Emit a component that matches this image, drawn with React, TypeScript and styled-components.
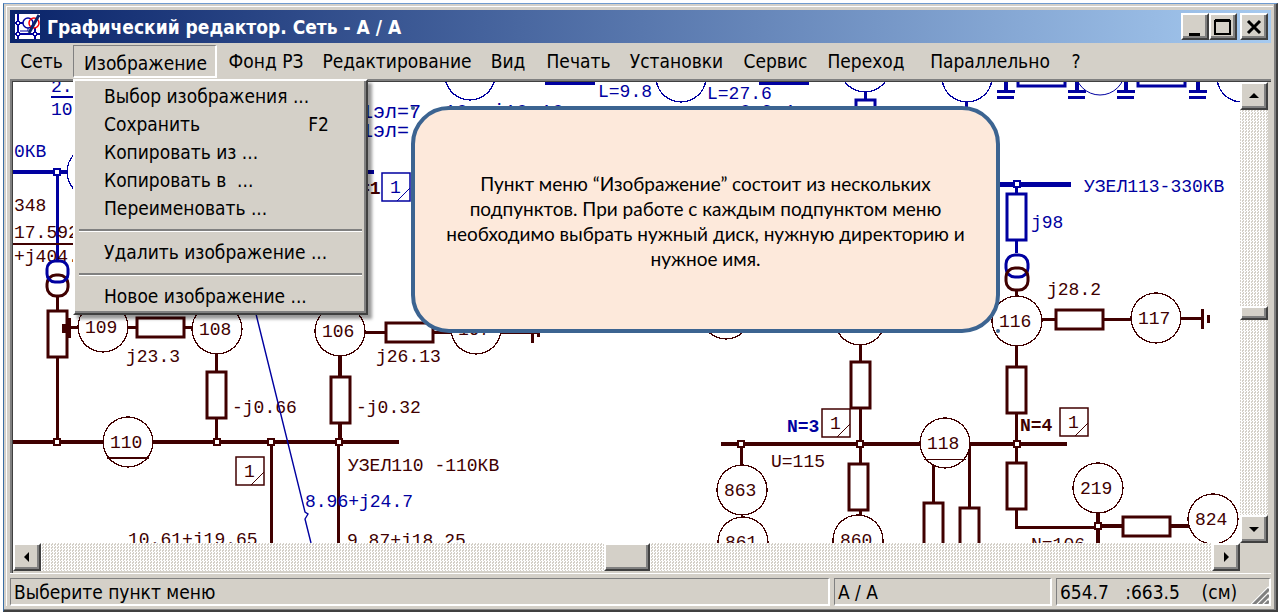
import React from "react";
import styled, { createGlobalStyle, css } from "styled-components";

const FACE = "#d4d0c8";
const SHADE = "#808080";
const DARK = "#404040";
const BLUE = "#0000a0";
const BROWN = "#400000";
const CALLOUT = "#3c6491";

const UI_FONT = `"DejaVu Sans Condensed", "DejaVu Sans", sans-serif`;

const GlobalStyle = createGlobalStyle`
  * { box-sizing: border-box; }
  body { margin: 0; background: #fff; font-family: ${UI_FONT}; color: #000; }
  button, input { font: inherit; color: inherit; }
`;

const raised = css`
  background: ${FACE};
  border: 2px solid;
  border-color: #fff ${DARK} ${DARK} #fff;
  box-shadow: inset -2px -2px 0 ${SHADE};
`;

const dither = css`
  background: repeating-conic-gradient(#fff 0 25%, ${FACE} 0 50%) 0 0 / 3px 3px;
`;

const Page = styled.main`
  position: relative;
  display: flex;
  height: 100vh;
  min-height: 420px;
  padding: 3px 6px 1px 3px;
`;

const Window = styled.section`
  flex: 1;
  min-width: 0;
  display: flex;
  background: ${FACE};
  border-style: solid;
  border-width: 1px 2px 2px 1px;
  border-color: #6f9bd0 ${DARK} ${DARK} #3a6ea5;
  box-shadow: inset -2px -1px 0 ${SHADE};
  padding: 2px 3px 4px 2px;
`;

const Frame = styled.div`
  flex: 1;
  min-width: 0;
  display: flex;
  flex-direction: column;
  border-top: 1px solid #fff;
  border-left: 1px solid #fff;
  padding: 3px 2px 0 3px;
`;

const TitleBar = styled.header`
  display: flex;
  align-items: center;
  flex: none;
  height: 33px;
  padding: 0 3px 0 5px;
  background: linear-gradient(90deg, #0a246a, #a6caf0);
`;

const Title = styled.h1`
  flex: 1;
  margin: 0 0 0 7px;
  font-size: 19px;
  line-height: 24px;
  font-weight: bold;
  color: #fff;
  white-space: nowrap;
`;

const CaptionButton = styled.button<{ $apart?: boolean }>`
  ${raised}
  display: grid;
  place-items: center;
  width: 28px;
  height: 27px;
  padding: 0;
  margin-left: ${(p) => (p.$apart ? 3 : 0)}px;
`;

const MenuBar = styled.nav`
  display: flex;
  flex: none;
  height: 36px;
  padding-top: 2px;
`;

const MenuSlot = styled.div<{ $width: number }>`
  position: relative;
  flex: none;
  width: ${(p) => p.$width}px;
`;

const MenuButton = styled.button<{ $open?: boolean }>`
  width: 100%;
  height: 33px;
  padding: ${(p) => (p.$open ? "4px 0 0 2px" : "0 0 1px")};
  border: 0 solid;
  background: none;
  font-size: 19px;
  line-height: 24px;
  text-align: center;
  white-space: pre;
  ${(p) =>
    p.$open &&
    css`
      border-width: 1px 2px 2px 1px;
      border-color: ${SHADE} #fff #fff ${SHADE};
    `}
`;

const Dropdown = styled.div`
  position: absolute;
  z-index: 2;
  top: 34px;
  left: 0;
  width: 295px;
  padding: 1px 4px 3px 4px;
  background: ${FACE};
  border-style: solid;
  border-width: 2px;
  border-color: #fff ${DARK} ${DARK} #fff;
  box-shadow: inset -2px -2px 0 ${SHADE}, 4px 4px 3px rgba(0, 0, 0, 0.4);
`;

const DropdownItem = styled.button`
  display: flex;
  justify-content: space-between;
  align-items: center;
  width: 100%;
  height: 28px;
  padding: 0 33px 0 25px;
  border: 0;
  background: none;
  font-size: 19px;
  line-height: 24px;
  white-space: pre;
`;

const Separator = styled.hr`
  height: 3px;
  margin: 7px 0 6px;
  border: 0;
  border-top: 2px solid ${SHADE};
  background: #fff;
`;

const Workspace = styled.div`
  flex: 1;
  min-height: 0;
  display: grid;
  grid-template-columns: minmax(0, 1fr) 28px;
  grid-template-rows: minmax(0, 1fr) 28px;
  border-style: solid;
  border-width: 2px 0 0 2px;
  border-color: ${SHADE};
  box-shadow: inset 1px 1px 0 ${DARK};
  padding: 1px 3px 2px 1px;
`;

const Canvas = styled.svg`
  display: block;
  width: 100%;
  height: 100%;
  background: #fff;
  font-family: "Liberation Mono", monospace;
  font-size: 18px;
`;

const ScrollBar = styled.div<{ $vertical?: boolean }>`
  display: flex;
  flex-direction: ${(p) => (p.$vertical ? "column" : "row")};
  min-width: 0;
  min-height: 0;
  ${dither}
`;

const ScrollButton = styled.button`
  ${raised}
  display: grid;
  place-items: center;
  flex: none;
  width: 28px;
  height: 28px;
  padding: 0;
`;

const ScrollRange = styled.input<{ $vertical?: boolean }>`
  appearance: none;
  flex: 1;
  min-width: 0;
  min-height: 0;
  margin: 0;
  background: none;
  ${(p) => (p.$vertical ? "writing-mode: vertical-lr; width: 28px;" : "height: 28px;")}
  &::-webkit-slider-thumb {
    appearance: none;
    width: ${(p) => (p.$vertical ? 28 : 46)}px;
    height: ${(p) => (p.$vertical ? 14 : 28)}px;
    border-radius: 0;
    ${raised}
  }
`;

const Corner = styled.div`
  background: ${FACE};
`;

const StatusBar = styled.footer`
  display: grid;
  grid-template-columns: minmax(0, 1fr) 218px 215px;
  gap: 4px;
  flex: none;
  padding-top: 4px;
  border-top: 1px solid #fff;
`;

const StatusPane = styled.div`
  display: flex;
  justify-content: space-between;
  height: 28px;
  padding: 1px 0 0 3px;
  border-style: solid;
  border-width: 1px 2px 2px 1px;
  border-color: ${SHADE} #fff #fff ${SHADE};
  font-size: 19px;
  line-height: 24px;
  white-space: pre;
  overflow: hidden;
`;

const Callout = styled.aside`
  position: absolute;
  z-index: 1;
  top: 106px;
  left: 411px;
  width: 589px;
  height: 227px;
  padding-top: 2px;
  display: flex;
  align-items: center;
  justify-content: center;
  border: 4px solid ${CALLOUT};
  border-radius: 38px;
  background: #fde9db;
  font-family: Lato, "Open Sans", sans-serif;
  font-size: 19px;
  line-height: 25px;
  text-align: center;

  p { margin: 0; white-space: nowrap; }
`;

type Tone = { c?: string };

const Line = ({ d, c = BROWN, w = 3 }: Tone & { d: string; w?: number }) => (
  <path d={d} stroke={c} strokeWidth={w} fill="none" shapeRendering="crispEdges" />
);

const Upright = ({ x, y, c = BROWN }: Tone & { x: number; y: number }) => (
  <rect x={x - 9} y={y + 1} width={19} height={46} fill="#fff" stroke={c} strokeWidth={3} />
);

const Flat = ({ x, y, c = BROWN }: Tone & { x: number; y: number }) => (
  <rect x={x + 1} y={y - 9} width={47} height={19} fill="#fff" stroke={c} strokeWidth={3} />
);

const Joint = ({ x, y, c = BROWN }: Tone & { x: number; y: number }) => (
  <rect x={x - 3} y={y - 3} width={6} height={6} fill="#fff" stroke={c} strokeWidth={2} shapeRendering="crispEdges" />
);

const Label = ({ x, y, c = BROWN, bold, children }: Tone & { x: number; y: number; bold?: boolean; children: string }) => (
  <text x={x} y={y} fill={c} fontWeight={bold ? "bold" : undefined} xmlSpace="preserve">
    {children}
  </text>
);

const Node = ({ x, y, name, c = BROWN }: Tone & { x: number; y: number; name?: string }) => (
  <g>
    <circle cx={x} cy={y} r={25} fill="#fff" stroke={c} strokeWidth={1.3} shapeRendering="crispEdges" />
    {name && <Label x={x - 18} y={y + 6}>{name}</Label>}
  </g>
);

const Flag = ({ x, y, c = BROWN }: Tone & { x: number; y: number }) => (
  <g>
    <rect x={x} y={y} width={28} height={28} fill="#fff" stroke={c} strokeWidth={1.5} />
    <path d={`M${x + 15} ${y + 28}L${x + 28} ${y + 15}`} stroke={c} />
    <Label x={x + 8} y={y + 20} c={c}>1</Label>
  </g>
);

const Ground = ({ x }: { x: number }) => (
  <g>
    <Line c={BLUE} d={`M${x} 78V91`} w={4} />
    <Line c={BLUE} d={`M${x - 9} 91.5H${x + 9}M${x - 9} 97.5H${x + 8}`} />
  </g>
);

const Scheme = () => (
  <Canvas role="img" aria-label="Схема сети">
    <g transform="translate(-13 -82)">
      {/* upper left feeder */}
      <Label x={51} y={92} c={BLUE}>2.5</Label>
      <Line c={BLUE} d="M51 97H90" w={2} />
      <Label x={51} y={115} c={BLUE}>10</Label>
      <Label x={14} y={157} c={BLUE}>0КВ</Label>
      <Line c={BLUE} d="M13 172H374" w={4} />
      <Node x={92} y={172} c={BLUE} />
      <Line c={BLUE} d="M57.5 172V260" />
      <Joint x={57} y={172} c={BLUE} />
      <Label x={14} y={211}>348</Label>
      <Label x={14} y={238}>17.592</Label>
      <Line d="M13 244H90" w={2} />
      <Label x={14} y={262}>+j404.</Label>
      <rect x={47} y={275} width={21} height={21} rx={9} fill="#fff" stroke={BROWN} strokeWidth={3} />
      <rect x={47} y={261} width={21} height={21} rx={8} fill="none" stroke={BLUE} strokeWidth={3} />
      <Line d="M57.5 297V442" />
      <Upright x={57} y={310} />
      <path d="M62 324h4v-6h5v20h-5v-5h-4z" fill={BROWN} />

      {/* 110 kV branches */}
      <Line d="M70 327.5H217" />
      <Node x={103} y={327} name="109" />
      <Flat x={136} y={327} />
      <Label x={126} y={362}>j23.3</Label>
      <Line d="M216.5 354V442" />
      <Node x={217} y={329} name="108" />
      <Upright x={216} y={371} />
      <Label x={232} y={413}>-j0.66</Label>
      <Line d="M340 332.5H538" />
      <Line d="M340 356V442" w={4} />
      <Node x={340} y={331} name="106" />
      <Flat x={385} y={332} />
      <Label x={376} y={362}>j26.13</Label>
      <Node x={476} y={329} name="107" />
      <Line d="M532.5 323V343M538.5 328V337" />
      <Upright x={340} y={376} />
      <Label x={356} y={413}>-j0.32</Label>

      <Line d="M271.5 442V560M338.5 442V560" />
      <Line d="M13 442H399" w={4} />
      <Node x={128} y={442} name="110" />
      <Line d="M107 458H149" w={2} />
      <Joint x={57} y={442} />
      <Joint x={217} y={442} />
      <Joint x={271} y={442} />
      <Joint x={339} y={442} />
      <Flag x={236} y={457} />
      <Label x={348} y={471}>УЗЕЛ110 -110КВ</Label>
      <path d="M256 314L305 512L308 514L305 519L311 543" stroke={BLUE} strokeWidth={1.4} fill="none" />
      <Label x={305} y={507} c={BLUE}>8.96+j24.7</Label>
      <Label x={128} y={545}>10.61+j19.65</Label>
      <Label x={347} y={546}>9.87+j18.25</Label>

      {/* upper edge */}
      <g fontSize={20}>
        <Label x={361} y={118} c={BLUE}>1эл=7</Label>
        <Label x={444} y={118} c={BLUE}>10 +j10 10</Label>
        <Label x={361} y={137} c={BLUE}>1эл=</Label>
      </g>
      <Label x={740} y={117} c={BLUE}>8 0 4</Label>
      <Label x={359} y={194} bold>=1</Label>
      <Flag x={382} y={173} c={BLUE} />
      <Node x={470} y={75} c={BLUE} />
      <Line c={BLUE} d="M545 83H595M759 83H809" w={4} />
      <Label x={598} y={97} c={BLUE}>L=9.8</Label>
      <Node x={681} y={77} c={BLUE} />
      <Label x={707} y={99} c={BLUE}>L=27.6</Label>
      <Line c={BLUE} d="M865 92V100M966 101V108" />
      <Upright x={865} y={99} c={BLUE} />
      <Node x={865} y={67} c={BLUE} />
      <Node x={967} y={77} c={BLUE} />
      <Ground x={1006} />
      <Ground x={1077} />
      <Ground x={1126} />
      <Ground x={1198} />
      <Flat x={1017} y={76} c={BLUE} />
      <Flat x={1137} y={76} c={BLUE} />
      <circle cx={1100} cy={70} r={25} fill="none" stroke={BLUE} />
      <Node x={1242} y={77} c={BLUE} />

      {/* 330 kV feeder */}
      <Line c={BLUE} d="M990 184.5H1071" w={5} />
      <Line c={BLUE} d="M1016.5 184V253" />
      <Joint x={1017} y={184} c={BLUE} />
      <Upright x={1016} y={193} c={BLUE} />
      <Label x={1084} y={192} c={BLUE}>УЗЕЛ113-330КВ</Label>
      <Label x={1031} y={228} c={BLUE}>j98</Label>
      <rect x={1006} y={255} width={22} height={22} rx={9} fill="#fff" stroke={BLUE} strokeWidth={3} />
      <rect x={1006} y={268} width={22} height={22} rx={9} fill="none" stroke={BROWN} strokeWidth={3} />
      <Line d="M1016.5 290V527H1098" />
      <Label x={1047} y={295}>j28.2</Label>
      <Line d="M1017 319.5H1156M1156 318.5H1202" />
      <Node x={1017} y={321} name="116" />
      <Flat x={1055} y={319} />
      <Node x={1156} y={318} name="117" />
      <Line d="M1202.5 309V329M1208.5 315V323" />
      <Upright x={1016} y={366} />

      {/* right-hand bus */}
      <Node x={726} y={314} />
      <Line d="M860.5 345V516M741.5 444V464" />
      <Node x={860} y={320} />
      <Upright x={860} y={361} />
      <Line d="M721 444H1067" w={4} />
      <Label x={787} y={432} c={BLUE} bold>N=3</Label>
      <Flag x={822} y={409} />
      <Label x={771} y={467}>U=115</Label>
      <Joint x={741} y={444} />
      <Joint x={860} y={444} />
      <Upright x={858} y={463} />
      <Node x={742} y={490} name="863" />
      <Node x={743} y={542} name="861" />
      <Node x={858} y={540} name="860" />
      <Line d="M933.5 460V503M969.5 444V508" />
      <Node x={945} y={443} name="118" />
      <Line d="M924 459.5H966" w={1} />
      <Upright x={933} y={502} />
      <Upright x={969} y={507} />
      <Label x={1020} y={431} bold>N=4</Label>
      <Flag x={1060} y={408} />
      <Joint x={1017} y={444} />
      <Upright x={1016} y={462} />
      <Line d="M1098 510V560M1098 526H1190" w={4} />
      <Node x={1098} y={488} name="219" />
      <Joint x={1098} y={526} />
      <Flat x={1122} y={526} />
      <Node x={1213} y={519} name="824" />
      <Label x={1031} y={550}>N=106</Label>

      {/* selection handles of the note */}
      <circle cx={413} cy={108} r={2} fill={CALLOUT} />
      <circle cx={998} cy={331} r={2} fill={CALLOUT} />
    </g>
  </Canvas>
);

const AppIcon = () => (
  <svg width="25" height="25" viewBox="0 0 25 25" aria-hidden="true">
    <rect width="25" height="25" fill="#fff" />
    <g fill="none" stroke={BLUE} strokeWidth="2">
      <path d="M0 9h8M3 0v25M0 20h25M20 14v11" />
      <circle cx="13" cy="9" r="5" strokeWidth="1.5" />
      <path d="M13 14v3H5" strokeWidth="1" />
    </g>
    <g fill="#fff" stroke={BLUE}>
      <rect x="1.500" y="7.500" width="3" height="3" />
      <rect x="1.500" y="18.500" width="3" height="3" />
      <rect x="18.500" y="18.500" width="3" height="3" />
    </g>
    <circle cx="19" cy="9" r="5" fill="none" stroke="#f00" strokeWidth="1.500" />
    <path d="M24 1L14 19" stroke="#0a246a" strokeWidth="3" />
  </svg>
);

const ARROWS = {
  up: "M7 3l5 5H2z",
  down: "M7 9L2 4h10z",
  left: "M4 6l5-5v10z",
  right: "M10 6L5 1v10z",
};

const Arrow = ({ to }: { to: keyof typeof ARROWS }) => (
  <svg width="14" height="12" viewBox="0 0 14 12" aria-hidden="true">
    <path d={ARROWS[to]} />
  </svg>
);

const MENUS: { name: string; width: number }[] = [
  { name: "Сеть", width: 63 },
  { name: "Изображение", width: 144 },
  { name: "Фонд РЗ", width: 98 },
  { name: "Редактирование", width: 164 },
  { name: "Вид", width: 58 },
  { name: "Печать", width: 83 },
  { name: "Установки", width: 113 },
  { name: "Сервис", width: 85 },
  { name: "Переход", width: 96 },
  { name: "Параллельно", width: 152 },
  { name: "?", width: 20 },
];

const COMMANDS: { name: string; hotkey?: string; divided?: boolean }[] = [
  { name: "Выбор изображения ..." },
  { name: "Сохранить", hotkey: "F2" },
  { name: "Копировать из ..." },
  { name: "Копировать в  ..." },
  { name: "Переименовать ..." },
  { name: "Удалить изображение ...", divided: true },
  { name: "Новое изображение ...", divided: true },
];

export default function App() {
  return (
    <Page>
      <GlobalStyle />
      <Window>
        <Frame>
          <TitleBar>
            <AppIcon />
            <Title>Графический редактор. Сеть - А / А</Title>
            <CaptionButton aria-label="Свернуть">
              <svg width="20" height="20"><path d="M4 16h11v3H4z" /></svg>
            </CaptionButton>
            <CaptionButton aria-label="Развернуть">
              <svg width="20" height="20"><path d="M2 4h15v13H2zM2 3h15" fill="none" stroke="#000" strokeWidth="2" /></svg>
            </CaptionButton>
            <CaptionButton $apart aria-label="Закрыть">
              <svg width="20" height="20"><path d="M4 4l12 12M16 4L4 16" stroke="#000" strokeWidth="3" /></svg>
            </CaptionButton>
          </TitleBar>

          <MenuBar>
            {MENUS.map(({ name, width }) => {
              const open = name === "Изображение";
              return (
                <MenuSlot key={name} $width={width}>
                  <MenuButton $open={open} aria-expanded={open}>{name}</MenuButton>
                  {open && (
                    <Dropdown>
                      {COMMANDS.map((c) => (
                        <React.Fragment key={c.name}>
                          {c.divided && <Separator />}
                          <DropdownItem>
                            <span>{c.name}</span>
                            {c.hotkey && <span>{c.hotkey}</span>}
                          </DropdownItem>
                        </React.Fragment>
                      ))}
                    </Dropdown>
                  )}
                </MenuSlot>
              );
            })}
          </MenuBar>

          <Workspace>
            <Scheme />
            <ScrollBar $vertical>
              <ScrollButton aria-label="Вверх"><Arrow to="up" /></ScrollButton>
              <ScrollRange $vertical type="range" defaultValue={50} aria-label="Вертикальная прокрутка" />
              <ScrollButton aria-label="Вниз"><Arrow to="down" /></ScrollButton>
            </ScrollBar>
            <ScrollBar>
              <ScrollButton aria-label="Влево"><Arrow to="left" /></ScrollButton>
              <ScrollRange type="range" defaultValue={50} aria-label="Горизонтальная прокрутка" />
              <ScrollButton aria-label="Вправо"><Arrow to="right" /></ScrollButton>
            </ScrollBar>
            <Corner />
          </Workspace>

          <StatusBar>
            <StatusPane>Выберите пункт меню</StatusPane>
            <StatusPane>А / А</StatusPane>
            <StatusPane>
              <span>654.7   :663.5    (см)</span>
              <svg width="18" height="25" viewBox="0 0 18 25" aria-hidden="true">
                <path d="M0 25L18 7M6 25L18 13M12 25L18 19" stroke="#fff" strokeWidth="2" />
                <path d="M2 25L18 9M8 25L18 15M14 25L18 21" stroke={SHADE} strokeWidth="3" />
              </svg>
            </StatusPane>
          </StatusBar>
        </Frame>
      </Window>

      <Callout>
        <p>
          Пункт меню “Изображение” состоит из нескольких
          <br />
          подпунктов. При работе с каждым подпунктом меню
          <br />
          необходимо выбрать нужный диск, нужную директорию и
          <br />
          нужное имя.
        </p>
      </Callout>
    </Page>
  );
}
